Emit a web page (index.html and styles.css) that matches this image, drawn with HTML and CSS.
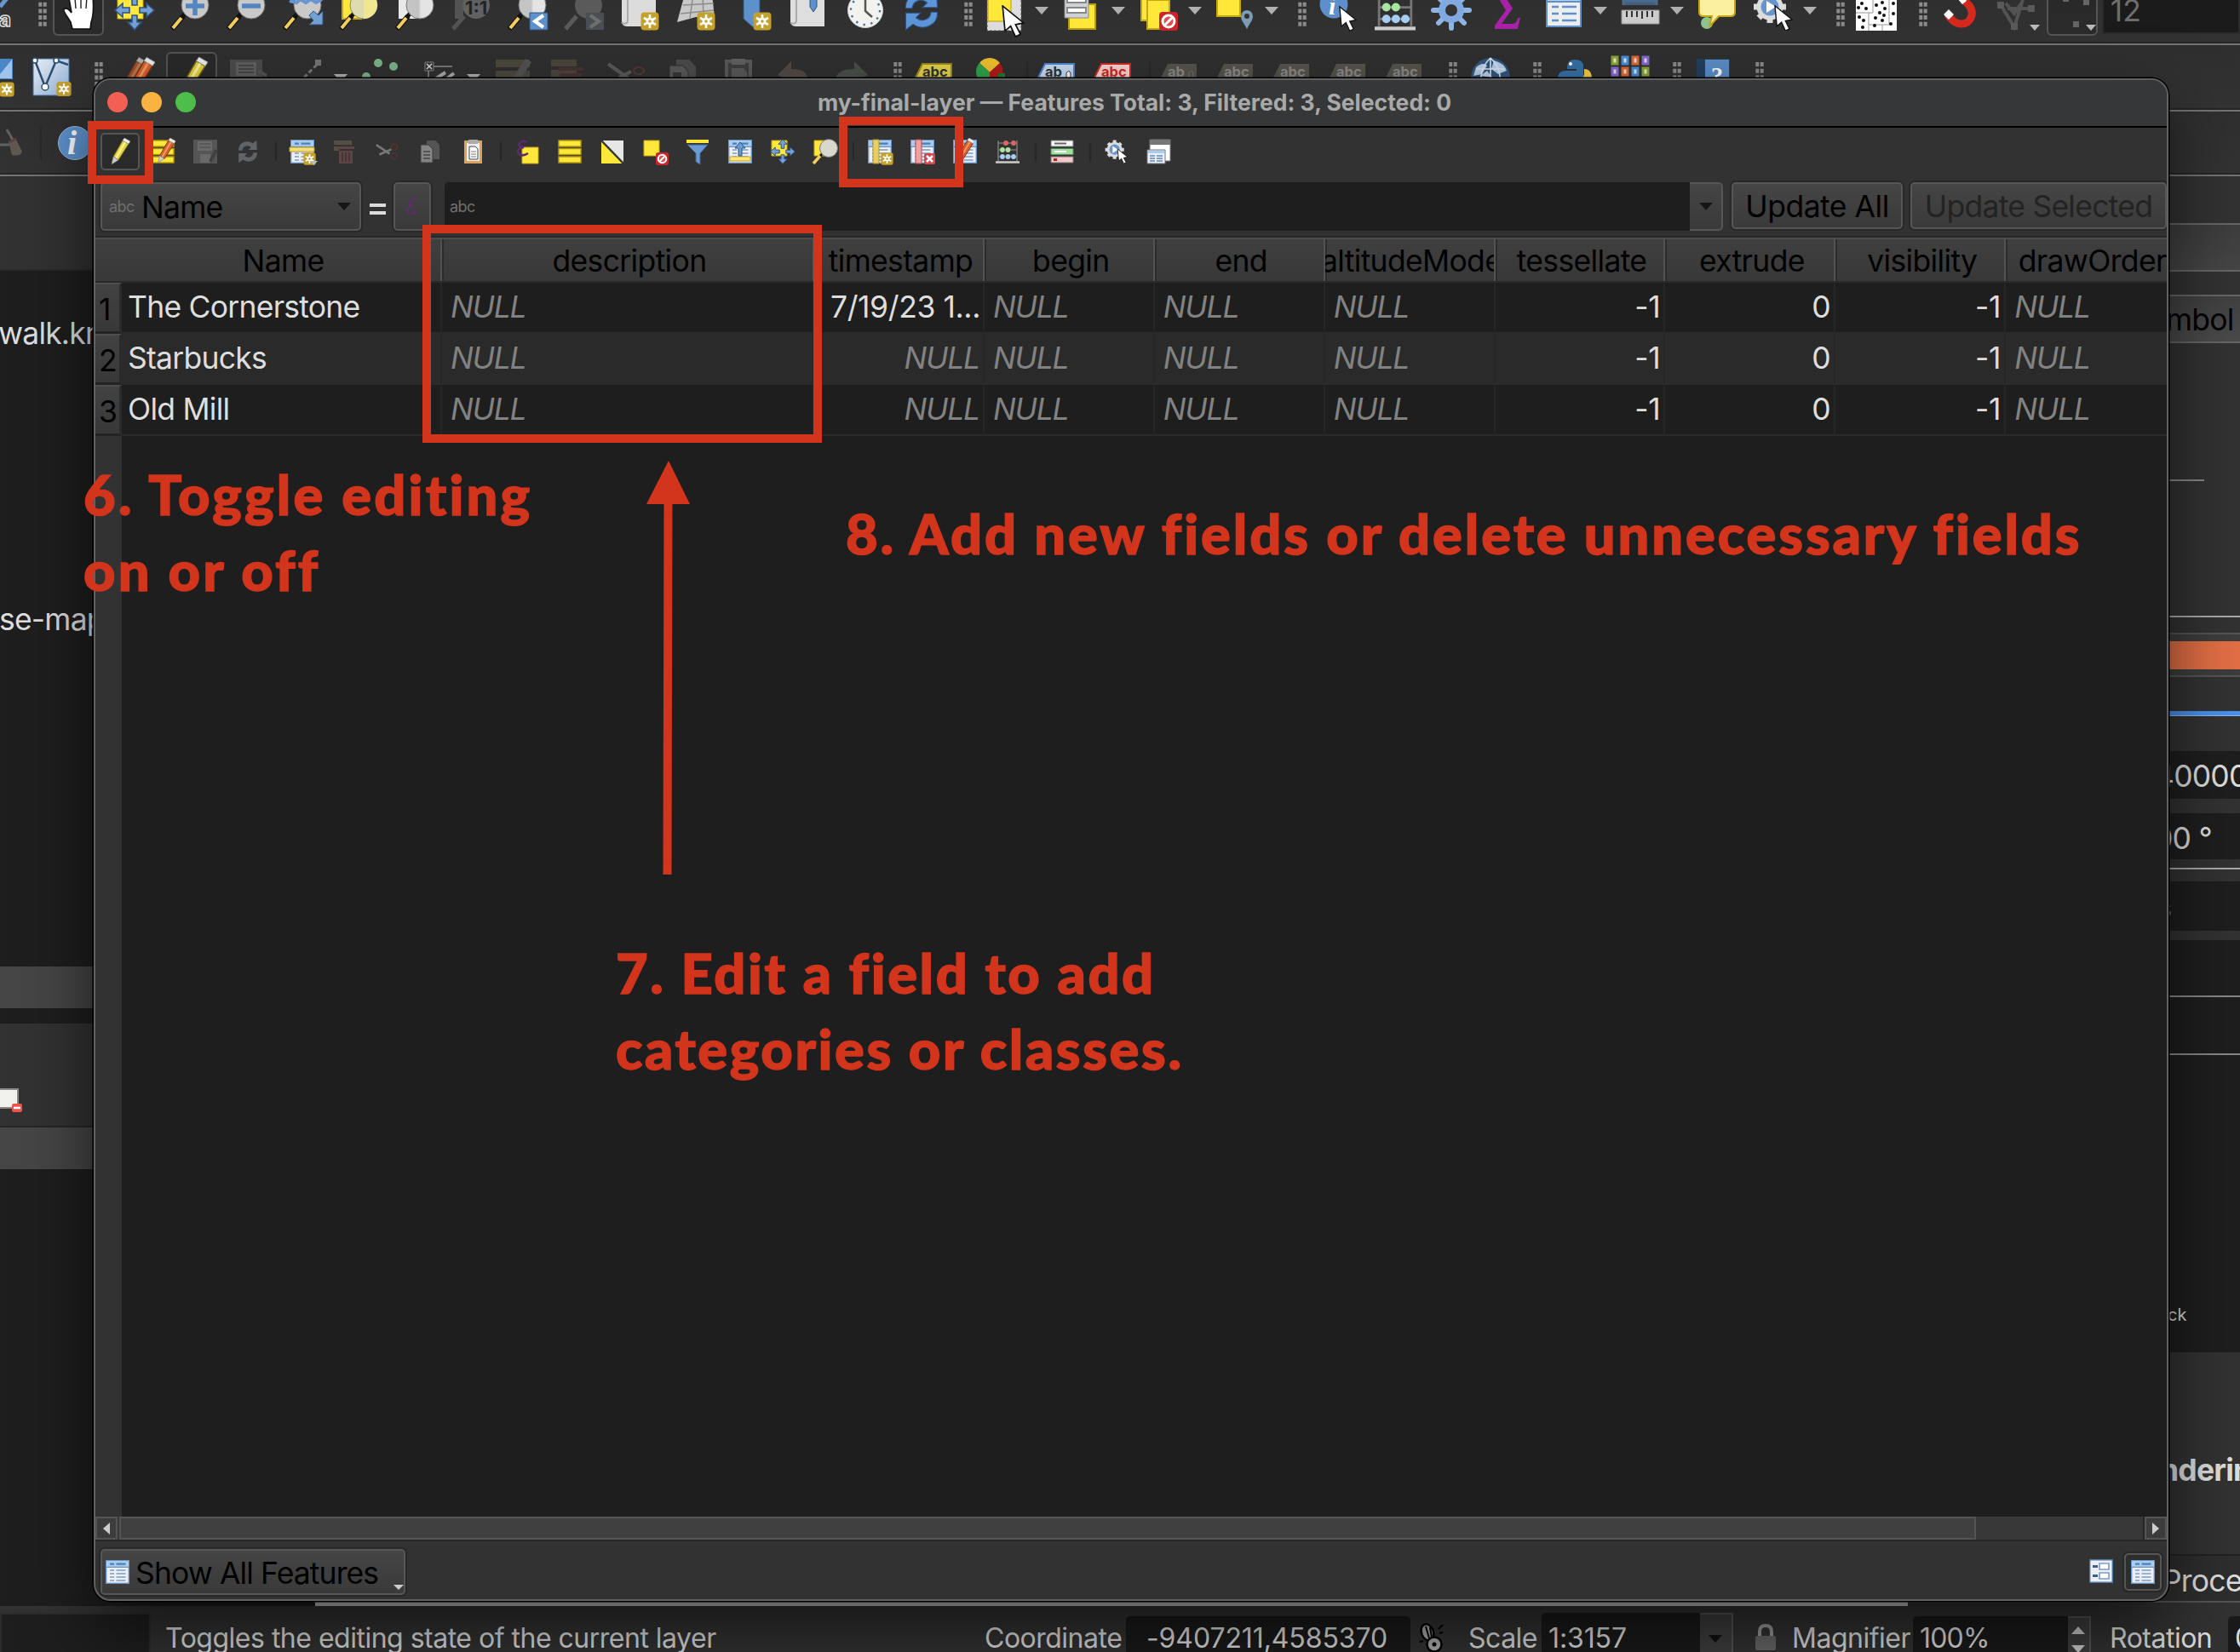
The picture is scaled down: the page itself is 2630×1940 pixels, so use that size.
FILE: index.html
```html
<!DOCTYPE html>
<html lang="en">
<head>
<meta charset="utf-8">
<title>my-final-layer — Features</title>
<link rel="stylesheet" href="styles.css">
</head>
<body>
<svg class="defs" width="0" height="0" aria-hidden="true">
<defs>
<linearGradient id="gl" x1="0" x2="1"><stop offset="0.45" stop-color="#c4c4c4"/><stop offset="0.55" stop-color="#e4e4e4"/></linearGradient>
<linearGradient id="gb" x1="0" y1="0" x2="1" y2="1"><stop offset="0" stop-color="#e8eef6"/><stop offset="1" stop-color="#8fb0d6"/></linearGradient>
<symbol id="star" viewBox="0 0 22 22"><rect x=".5" y=".5" width="21" height="21" rx="4" fill="#c4a02c"/><path d="M11 3v16M4 7l14 8M18 7L4 15" stroke="#fff" stroke-width="2.6"/><circle cx="11" cy="11" r="4.4" fill="#fff"/><circle cx="11" cy="11" r="1.8" fill="#c4a02c"/></symbol>
<symbol id="handle" viewBox="0 0 48 48"><path d="M2 46L15 31" stroke="#111" stroke-width="6"/><path d="M3 45L13 33" stroke="#f4cf5e" stroke-width="4"/><path d="M14 32l4-5" stroke="#111" stroke-width="5"/></symbol>
<symbol id="no" viewBox="0 0 22 22"><rect width="22" height="22" rx="4" fill="#c9252b"/><circle cx="11" cy="11" r="7" fill="#d9534f" stroke="#fff" stroke-width="3"/><path d="M6 16L16 6" stroke="#fff" stroke-width="3"/></symbol>
<symbol id="cursor" viewBox="0 0 28 40"><path d="M1 1l3 31 7-6 6 13 6-3-6-12 10-2z" fill="#fff" stroke="#111" stroke-width="1.8"/></symbol>
<symbol id="table" viewBox="0 0 28 28"><rect x=".7" y=".7" width="26.600" height="26.600" fill="#eceff5" stroke="#6a94c4" stroke-width="1.400"/><rect x="1.400" y="1.400" width="25.200" height="6.600" fill="#a9cdf0"/><path d="M5 4.700h5M12.500 4.700h11" stroke="#4f7fb5" stroke-width="2.200"/><path d="M1 8.300h26" stroke="#4f7fb5" stroke-width="1"/><path d="M5 12h5M5 16h5M5 20h5M5 24h5M12.500 12h11M12.500 16h11M12.500 20h11M12.500 24h11" stroke="#7d9cc4" stroke-width="1.700"/></symbol>
<symbol id="pencil" viewBox="0 0 24 32"><path d="M15 3l7 4L10 26l-6-4z" fill="#e6d43c" stroke="#6d651b"/><path d="M18 5L7 24" stroke="#fbf3a0" stroke-width="2"/><path d="M15 3l2-3 7 4-2 3z" fill="#eee" stroke="#999" stroke-width=".6"/><path d="M4 22l6 4-8 5z" fill="#ccc" stroke="#777" stroke-width=".6"/></symbol>
<symbol id="rpencil" viewBox="0 0 24 32"><path d="M15 3l7 4L10 26l-6-4z" fill="#d9622b" stroke="#7a3516"/><path d="M18 5L7 24" stroke="#f29a62" stroke-width="2"/><path d="M15 3l2-3 7 4-2 3z" fill="#eee" stroke="#999" stroke-width=".6"/><path d="M4 22l6 4-8 5z" fill="#ccc" stroke="#777" stroke-width=".6"/></symbol>
<symbol id="rows" viewBox="0 0 28 28"><path d="M1 1h26v7H1zM1 10.500h26v7H1zM1 20h26v7H1z" fill="#ffe83a" stroke="#b89a10" stroke-width="1.400"/></symbol>
<symbol id="scissors" viewBox="0 0 32 28"><path d="M1 5l18 12M5 18l16-7" stroke="#777" stroke-width="3"/><circle cx="25" cy="8" r="4" fill="none" stroke="#553333" stroke-width="1.700"/><circle cx="25" cy="20" r="4" fill="none" stroke="#553333" stroke-width="1.700"/></symbol>
<symbol id="copy" viewBox="0 0 28 28"><path d="M10 1h10l5 5v17H10z" fill="#555"/><path d="M3 6h9l5 5v16H3z" fill="#858585" stroke="#3c3c3c"/><path d="M6 14h8M6 18h8M6 22h8" stroke="#444" stroke-width="1.500"/></symbol>
<symbol id="arrows4" viewBox="0 0 48 48"><path d="M24 1l8 9h-5v8h-6v-8h-5zM24 47l8-9h-5v-8h-6v8h-5zM1 24l9-8v5h8v6h-8v5zM47 24l-9-8v5h-8v6h8v5z" fill="#74a0d4" stroke="#2f5480" stroke-width="1.600"/></symbol>
<symbol id="gear" viewBox="0 0 48 48"><g stroke="#8fb5e6" stroke-width="6" stroke-linecap="round"><path d="M24 3v42M3 24h42M9 9l30 30M39 9L9 39"/></g><circle cx="24" cy="24" r="11" fill="#333" stroke="#7fa9e0" stroke-width="8"/></symbol>
<symbol id="run" viewBox="0 0 48 48"><g stroke="#dcdcdc" stroke-width="7"><path d="M20 1v38M1 20h38M7 7l26 26M33 7L7 33"/></g><circle cx="20" cy="20" r="13" fill="#6695cf" stroke="#dcdcdc" stroke-width="5"/><path d="M16 13l11 7-11 7z" fill="#fff"/><use href="#cursor" x="24" y="18" width="24" height="31"/></symbol>
<symbol id="abacus" viewBox="0 0 28 28"><path d="M3 1v24M25 1v24M3 4h22M3 12h22M3 20h22" stroke="#777" stroke-width="1.600" fill="none"/><path d="M0 26.500h28" stroke="#ccc" stroke-width="2.400"/><g fill="#e06666"><circle cx="12" cy="4" r="2.900"/><circle cx="21" cy="4" r="2.900"/></g><g fill="#a8e6a0"><circle cx="8" cy="12" r="2.900"/><circle cx="14.500" cy="12" r="2.900"/></g><g fill="#a6cdf2"><circle cx="8" cy="20" r="2.900"/><circle cx="14.500" cy="20" r="2.900"/><circle cx="21" cy="20" r="2.900"/></g></symbol>
<symbol id="tag" viewBox="0 0 48 48"><path d="M3 24L11 8h34v32H11z"/></symbol>
<symbol id="grip" viewBox="0 0 10 36"><path d="M2.300 0v36M7.700 0v36" stroke="#8c8c8c" stroke-width="4" stroke-dasharray="5 2.700"/></symbol>
<symbol id="refresh" viewBox="0 0 40 44"><path d="M3 20C2 6 18-1 29 7l7-6 1 18H21l5-5C19 8 10 13 10 20z"/><path d="M37 24c1 14-15 21-26 13l-8 6V25h16l-5 5c7 6 16 1 16-6z"/></symbol>
</defs>
</svg>

<div class="app">
  <div class="bar bar-a">
    <span class="stub-a"><svg width="20" height="48" viewBox="0 0 20 48"><path d="M0 20L8 10" stroke="#6695cf" stroke-width="5"/><text x="-1" y="43" font-size="24" font-weight="700" fill="#333" stroke="#ddd" stroke-width="1.500" font-family="Inter">a</text></svg></span>
    <i class="grip"><svg><use href="#grip"/></svg></i>
    <i class="tool on"><svg viewBox="0 0 48 48"><path d="M17 46l-2-8C10 30 6 25 7 23c3-3 7 1 9 4L12 4c4-3 6 0 7 3V0h7v8V0h7l1 8c1-3 6-3 7 0 1 12 1 22-2 30l-1 8z" fill="#fff" stroke="#111" stroke-width="1.600"/><path d="M20 10l1 12M27 8v14M34 8l-1 14" stroke="#222" stroke-width="1.400"/></svg></i>
    <i class="tool"><svg viewBox="0 0 48 48"><path d="M4 2h30v32H4z" fill="#ffe83a" stroke="#c7a616"/><use href="#arrows4"/></svg></i>
    <i class="tool"><svg viewBox="0 0 48 48"><use href="#handle"/><circle cx="29" cy="18" r="16" fill="#c9c9c9" stroke="#777"/><path d="M29 8v22M18 19h22" stroke="#5585c0" stroke-width="5.500"/></svg></i>
    <i class="tool"><svg viewBox="0 0 48 48"><use href="#handle"/><circle cx="29" cy="18" r="16" fill="#c9c9c9" stroke="#777"/><path d="M18 19h22" stroke="#5585c0" stroke-width="5.500"/></svg></i>
    <i class="tool"><svg viewBox="0 0 48 48"><use href="#handle"/><circle cx="29" cy="18" r="16" fill="#c9c9c9" stroke="#777"/><path d="M8 13l8 2 5-4 6 4 6-4 6 4 7-4" stroke="#6695cf" stroke-width="4" fill="none"/><path d="M31 41h16V25l-5 5-6-5-5 5 5 6z" fill="#74a0d4" stroke="#2f5480"/></svg></i>
    <i class="tool"><svg viewBox="0 0 48 48"><path d="M4 2h22v32H4z" fill="#ffe83a" stroke="#c7a616" stroke-width="2"/><use href="#handle"/><circle cx="29" cy="18" r="16" fill="#dedcae" stroke="#888"/><path d="M29 2a16 16 0 010 32z" fill="#efe890"/></svg></i>
    <i class="tool"><svg viewBox="0 0 48 48"><path d="M4 2h22v32H4z" fill="#e8e8e8"/><use href="#handle"/><circle cx="29" cy="18" r="16" fill="url(#gl)" stroke="#777"/></svg></i>
    <i class="tool dim"><svg viewBox="0 0 48 48"><path d="M4 2h10v32H4z" fill="#888"/><path d="M2 46L15 31" stroke="#888" stroke-width="5"/><circle cx="29" cy="18" r="16" fill="#aaa"/><text x="16" y="29" font-size="22" font-weight="700" fill="#111" font-family="Inter">1:1</text></svg></i>
    <i class="tool"><svg viewBox="0 0 48 48"><use href="#handle"/><circle cx="29" cy="18" r="16" fill="url(#gl)" stroke="#777"/><path d="M26 27h21v20H26z" fill="#5c91cb" stroke="#2f5480"/><path d="M42 30l-10 7 10 7" stroke="#fff" stroke-width="4" fill="none"/></svg></i>
    <i class="tool dim"><svg viewBox="0 0 48 48"><path d="M2 46L15 31" stroke="#999" stroke-width="5"/><circle cx="29" cy="18" r="16" fill="#999"/><path d="M26 27h21v20H26z" fill="#6f7d8a"/><path d="M31 30l10 7-10 7" stroke="#ccc" stroke-width="4" fill="none"/></svg></i>
    <i class="tool"><svg viewBox="0 0 48 48"><path d="M2 0h40v43H8c-4 0-6-3-6-6z" fill="#dcdcdc"/><path d="M9 0v36c0 4-5 5-7 2" stroke="#aaa" stroke-width="2" fill="none"/><use href="#star" x="24" y="26" width="22" height="22"/></svg></i>
    <i class="tool"><svg viewBox="0 0 48 48"><path d="M10 5h32l3 28-22-1-22 6z" fill="#c9c9c9"/><path d="M8 18l36-2M5 28l39-4M20 5l-4 28M31 5l1 26" stroke="#8c8c8c" stroke-width="1.500"/><use href="#star" x="24" y="26" width="22" height="22"/></svg></i>
    <i class="tool"><svg viewBox="0 0 48 48"><path d="M13 0h19v30l-8 14-11-10z" fill="#5c91cb" stroke="#2f5480"/><use href="#star" x="24" y="26" width="22" height="22"/></svg></i>
    <i class="tool"><svg viewBox="0 0 48 48"><path d="M2 0h40v43H8c-4 0-6-3-6-6z" fill="#dedede"/><path d="M9 0v36c0 4-5 5-7 2" stroke="#aaa" stroke-width="2" fill="none"/><path d="M25 0h8v20l-4 6-4-6z" fill="#5c91cb" stroke="#2f5480"/></svg></i>
    <i class="tool"><svg viewBox="0 0 48 48"><circle cx="24" cy="24" r="20.500" fill="#f2f2ee" stroke="#ccc"/><circle cx="24" cy="24" r="17" fill="none" stroke="#3d6ea8" stroke-width="2.400" stroke-dasharray="2.400 6.500"/><path d="M24 8v17l8 7" stroke="#555" stroke-width="2.500" fill="none"/></svg></i>
    <i class="tool"><svg viewBox="0 0 40 44"><use href="#refresh" fill="#5d95d6" stroke="#2a5590"/></svg></i>
    <i class="grip"><svg><use href="#grip"/></svg></i>
    <i class="tool drop"><svg viewBox="0 0 48 48"><path d="M3 2h40v46H3z" fill="#ddd" stroke="#555" stroke-dasharray="3 2"/><path d="M4 2h27v35H4z" fill="#ffe83a" stroke="#b89a10"/><use href="#cursor" x="19" y="18" width="29" height="38" /></svg></i>
    <i class="tool drop"><svg viewBox="0 0 48 48"><path d="M9 17h31v29H9z" fill="#ffe83a" stroke="#b89a10" stroke-width="2"/><path d="M4 0h28v33H4z" fill="#cfd3d8" stroke="#888"/><path d="M7 10h22v5H7zM7 21h22v6H7z" fill="#fff" stroke="#888" stroke-width="2"/></svg></i>
    <i class="tool drop"><svg viewBox="0 0 48 48"><path d="M4 2h26v34H4z" fill="#ffe83a" stroke="#c7a616" stroke-width="2"/><path d="M11 12h26v34H11z" fill="#ffe83a" stroke="#c7a616" stroke-width="2"/><use href="#no" x="25" y="26" width="22" height="22"/></svg></i>
    <i class="tool drop"><svg viewBox="0 0 48 48"><path d="M3 0h27v31H3z" fill="#ffe83a" stroke="#c7a616" stroke-width="2"/><path d="M38 46c-4-8-7-10-7-15a7 7 0 0114 0c0 5-3 7-7 15z" fill="#7c9cb5"/><circle cx="38" cy="31" r="3" fill="#333"/></svg></i>
    <i class="grip"><svg><use href="#grip"/></svg></i>
    <i class="tool"><svg viewBox="0 0 48 48"><circle cx="18" cy="17" r="16.500" fill="#5c8fcb"/><text x="12" y="29" font-size="30" font-style="italic" font-weight="700" font-family="Liberation Serif" fill="#fff">i</text><use href="#cursor" x="22" y="19" width="25" height="30"/></svg></i>
    <i class="tool"><svg viewBox="0 0 28 28"><use href="#abacus"/></svg></i>
    <i class="tool"><svg viewBox="0 0 48 48"><use href="#gear"/></svg></i>
    <i class="tool"><svg viewBox="0 0 48 48"><path d="M10 0h26v12h-3c0-4-2-6-6-6h-7l10 16-13 18h12c5 0 6-3 7-7h3l-3 13H9v-4l13-18L10 4z" fill="#a822a8"/></svg></i>
    <i class="tool drop"><svg viewBox="0 0 48 48"><path d="M4 0h40v43H4z" fill="#eee" stroke="#5c91cb" stroke-width="2"/><path d="M4 2h40v12H4z" fill="#b5d2f0" stroke="#5c91cb" stroke-width="2"/><path d="M10 20h8M10 28h8M10 36h8M22 20h17M22 28h17M22 36h17" stroke="#5c91cb" stroke-width="2.500"/></svg></i>
    <i class="tool drop"><svg viewBox="0 0 48 48"><path d="M4 18V13h39v5" stroke="#4a6c90" stroke-width="3" fill="#445f7d"/><path d="M2 24h44v16H2z" fill="#ccc" stroke="#999"/><path d="M8 25v7M14 25v7M20 25v7M26 25v9M32 25v7M38 25v7" stroke="#333" stroke-width="2"/></svg></i>
    <i class="tool"><svg viewBox="0 0 48 48"><circle cx="12" cy="39" r="7" fill="#8fc48f"/><path d="M3 0h42v26q0 5-5 5H26L15 43l3-12H8q-5 0-5-5z" fill="#fbf0a0" stroke="#c7a616" stroke-width="2"/></svg></i>
    <i class="tool drop"><svg viewBox="0 0 48 48"><use href="#run"/></svg></i>
    <i class="grip"><svg><use href="#grip"/></svg></i>
    <i class="tool"><svg viewBox="0 0 48 48"><path d="M0 0h48v48H0z" fill="#fff"/><path d="M0 27h20V12M15 27v21M39 0v41H15M31 41v7" stroke="#999" fill="none"/><g fill="#111"><circle cx="7" cy="16" r="2"/><circle cx="12" cy="22" r="2"/><circle cx="3" cy="21" r="2"/><circle cx="4" cy="32" r="2"/><circle cx="9" cy="36" r="2"/><circle cx="8" cy="44" r="2"/><circle cx="24" cy="18" r="2"/><circle cx="31" cy="15" r="2"/><circle cx="34" cy="22" r="2"/><circle cx="28" cy="27" r="2"/><circle cx="23" cy="33" r="2"/><circle cx="33" cy="30" r="2"/><circle cx="31" cy="36" r="2"/><circle cx="44" cy="16" r="2"/><circle cx="44" cy="28" r="2"/><circle cx="22" cy="42" r="2"/><circle cx="41" cy="40" r="2"/></g></svg></i>
    <i class="grip"><svg><use href="#grip"/></svg></i>
    <i class="tool"><svg viewBox="0 0 48 48"><path d="M10 29c8 14 22 14 27 4 4-9-2-16-9-21" fill="none" stroke="#d42a1e" stroke-width="9"/><path d="M5 29l6-6 6 6-6 6zM21 10l6-4 5 7-5 4z" fill="#fff"/></svg></i>
    <i class="tool corner dim"><svg viewBox="0 0 48 48"><path d="M5 16l17 28L32 12M14 22h30M12 16l10 12 8-12" stroke="#888" stroke-width="4" fill="none"/><path d="M2 14h8v8H2zM18 39h8v8h-8zM38 18h8v8h-8z" fill="#999"/></svg></i>
    <i class="tool corner on"><svg viewBox="0 0 48 48"><path d="M14 8h7v7h-7zM38 12h7v7h-7zM26 38h7v7h-7z" transform="translate(-1 -1)" fill="#666"/></svg></i>
    <span class="num">12</span>
  </div>

  <div class="bar bar-b">
    <span class="stub-b"><svg width="20" height="48" viewBox="0 0 20 48"><path d="M0 2h15v24H0z" fill="#4b86c6"/><path d="M0 20L14 3v22H0z" fill="#9fc3ea"/><use href="#star" x="-2" y="29" width="20" height="18"/></svg></span>
    <i class="tool"><svg viewBox="0 0 48 48"><path d="M2 2h42v43H2z" fill="url(#gb)" stroke="#3f6f9f"/><path d="M4 4l12 31L29 4l14 5" stroke="#2f4f70" stroke-width="2.500" fill="none"/><g fill="#fff" stroke="#2f4f70" stroke-width="1.500"><circle cx="4" cy="4" r="3"/><circle cx="29" cy="4" r="3"/><circle cx="16" cy="35" r="4"/></g><use href="#star" x="29" y="28" width="18" height="19"/></svg></i>
    <i class="grip"><svg><use href="#grip"/></svg></i>
    <i class="tool"><svg viewBox="0 0 48 48"><use href="#rpencil" x="4" y="0" width="34" height="46" opacity=".7"/><use href="#rpencil" x="13" y="0" width="34" height="46"/></svg></i>
    <i class="tool on"><svg viewBox="0 0 48 48"><use href="#pencil" x="6" y="0" width="38" height="48"/></svg></i>
    <i class="tool dim"><svg viewBox="0 0 48 48"><path d="M3 3h38v42H3z" fill="#777"/><path d="M10 6h24v16H10z" fill="#aaa"/><path d="M13 10h18M13 14h18M13 18h18" stroke="#555" stroke-width="1.500"/><path d="M36 16l10 6" stroke="#888" stroke-width="4"/></svg></i>
    <i class="tool drop"><svg viewBox="0 0 48 48"><path d="M24 24L40 8" stroke="#777" stroke-width="3" stroke-dasharray="5 3"/><path d="M37 3h7v7h-7z" fill="#777"/></svg></i>
    <i class="tool"><svg viewBox="0 0 48 48"><g fill="#7db58a"><circle cx="21" cy="7" r="5"/><circle cx="39" cy="11" r="5"/><circle cx="7" cy="23" r="5"/></g></svg></i>
    <i class="tool drop"><svg viewBox="0 0 48 48"><path d="M12 11h30M14 14v14" stroke="#777" stroke-width="2"/><path d="M10 6h10v10H10z" fill="#333" stroke="#888"/><path d="M12 8l6 6M18 8l-6 6" stroke="#ddd" stroke-width="1.500"/><path d="M22 26l12-8M36 25l8-6" stroke="#aaa" stroke-width="4"/></svg></i>
    <i class="tool dim"><svg viewBox="0 0 48 48"><path d="M3 3h40v9H3zM3 16h40v9H3z" fill="#77704f"/><path d="M22 26L38 2l7 4-14 22z" fill="#888"/></svg></i>
    <i class="tool dim"><svg viewBox="0 0 48 48"><path d="M2 3h30v8H2zM2 15h30v9H2z" fill="#776a4f"/><path d="M10 12h30v4H10zM12 19h26v20H12z" fill="#6d3a3a"/></svg></i>
    <i class="tool dim"><svg viewBox="0 0 48 48"><path d="M3 8l28 20M16 24l14-7" stroke="#999" stroke-width="4"/><ellipse cx="39" cy="16" rx="6" ry="4" fill="none" stroke="#844" stroke-width="2"/></svg></i>
    <i class="tool dim"><svg viewBox="0 0 48 48"><path d="M17 3h15l8 8v24H17z" fill="#777"/><path d="M9 10h16l6 7v30H9z" fill="#999" stroke="#333"/><path d="M13 18h10v6H13z" fill="#444"/></svg></i>
    <i class="tool dim"><svg viewBox="0 0 48 48"><path d="M8 3h32v44H8z" fill="#999"/><path d="M12 7h24v40H12z" fill="#555"/><path d="M16 2h16v7H16z" fill="#aaa"/><path d="M16 13h14l4 5v20H16z" fill="#999"/></svg></i>
    <i class="tool dim"><svg viewBox="0 0 48 48"><path d="M4 21L20 5v9c14 0 20 5 20 15H20z" fill="#8a7466"/></svg></i>
    <i class="tool dim"><svg viewBox="0 0 48 48"><path d="M44 21L28 5v9C14 14 6 18 6 29h22z" fill="#73806f"/></svg></i>
    <i class="grip"><svg><use href="#grip"/></svg></i>
    <i class="tool"><svg viewBox="0 0 48 48"><use href="#tag" fill="#e6d24a" stroke="#9c8a1a" stroke-width="2"/><text class="tg" x="11" y="23">abc</text></svg></i>
    <i class="tool"><svg viewBox="0 0 48 48"><path d="M24 18L12 7a15 15 0 0124 0z" fill="#f2c22e"/><path d="M24 18L12 7C4 16 8 30 24 34z" fill="#2fa44a"/><path d="M24 18L36 7c8 10 2 24-12 27z" fill="#b51a1a"/><path d="M34 19h8v8h-8z" fill="#1f7a34"/></svg></i>
    <i class="sep"></i>
    <i class="tool"><svg viewBox="0 0 48 48"><use href="#tag" fill="#c8dcf4" stroke="#4b86d6" stroke-width="2"/><text class="tg" x="11" y="23">ab</text><path d="M36 24v-5q3-5 5 0v5" stroke="#333" fill="#fff"/></svg></i>
    <i class="tool"><svg viewBox="0 0 48 48"><use href="#tag" fill="#fbd5d5" stroke="#d42a1e" stroke-width="2"/><text class="tg red" x="11" y="23">abc</text></svg></i>
    <i class="sep"></i>
    <i class="tool"><svg viewBox="0 0 48 48"><use href="#tag" fill="#56554c"/><text class="tg off" x="11" y="23">ab</text><path d="M36 24v-5q3-5 5 0v5" stroke="#777" fill="none"/></svg></i>
    <i class="tool"><svg viewBox="0 0 48 48"><use href="#tag" fill="#56554c"/><text class="tg off" x="11" y="23">abc</text></svg></i>
    <i class="tool"><svg viewBox="0 0 48 48"><use href="#tag" fill="#56554c"/><text class="tg off" x="11" y="23">abc</text></svg></i>
    <i class="tool"><svg viewBox="0 0 48 48"><use href="#tag" fill="#56554c"/><text class="tg off" x="11" y="23">abc</text></svg></i>
    <i class="tool"><svg viewBox="0 0 48 48"><use href="#tag" fill="#56554c"/><text class="tg off" x="11" y="23">abc</text></svg></i>
    <i class="grip wide"><svg><use href="#grip"/></svg></i>
    <i class="tool"><svg viewBox="0 0 48 48"><circle cx="24" cy="24" r="23" fill="#34567c"/><path d="M7 12q8-7 13-2l-6 10-10 2zM28 4q12 3 15 12l-10 4-8-6zM12 22l8-6 6 8z" fill="#b8d0ea"/><path d="M24 1C10 14 12 30 14 40M24 1c14 13 12 29 10 39M24 1v40M7 14h34" stroke="#dbe7f4" stroke-width="1.600" fill="none"/></svg></i>
    <i class="grip"><svg><use href="#grip"/></svg></i>
    <i class="tool"><svg viewBox="0 0 48 48"><path d="M16 12q0-9 9-9 10 0 10 8v14H5q0-9 10-9h12v-2H16z" fill="#3671a8"/><circle cx="20" cy="8" r="2" fill="#fff"/><path d="M36 14q9 0 9 12H30q6-2 6-6z" fill="#f6cf45"/></svg></i>
    <i class="tool"><svg viewBox="0 0 48 48"><g stroke-width="3"><path d="M3 0h6v8H3z" fill="#e6efc0" stroke="#8aa63a"/><path d="M15 0h6v8h-6z" fill="#d5e8fa" stroke="#4b8fd6"/><path d="M27 0h6v8h-6z" fill="#fbdcca" stroke="#dc6a3a"/><path d="M39 0h6v8h-6z" fill="#e3daf8" stroke="#8a6ad0"/><path d="M3 13h6v8H3z" fill="#e3daf8" stroke="#8a6ad0"/><path d="M15 13h6v8h-6z" fill="#fbdcca" stroke="#dc6a3a"/><path d="M27 13h6v8h-6z" fill="#d5e8fa" stroke="#4b8fd6"/><path d="M39 13h6v8h-6z" fill="#e6efc0" stroke="#8aa63a"/></g></svg></i>
    <i class="grip"><svg><use href="#grip"/></svg></i>
    <i class="tool"><svg viewBox="0 0 48 48"><path d="M5 2h39v44H5z" fill="#24405e"/><path d="M15 3h28v42H15z" fill="#5c8fc8"/><text x="22" y="31" font-size="28" fill="#fff" font-family="Liberation Serif" font-weight="700">?</text></svg></i>
    <i class="grip"><svg><use href="#grip"/></svg></i>
  </div>

  <div class="bar bar-c">
    <i class="broom dim"><svg width="32" height="48" viewBox="0 0 32 48"><path d="M0 26h12M8 8l8 14" stroke="#aaa" stroke-width="3"/><path d="M10 22l8-4 8 16q-2 6-12 4z" fill="#a8937f"/><path d="M11 23l8-4" stroke="#a55" stroke-width="3"/></svg></i>
    <i class="sep"></i>
    <i class="tool"><svg viewBox="0 0 48 48"><circle cx="24" cy="24" r="19.500" fill="#5f93cf" stroke="#9bbce0"/><text x="15" y="37" font-size="40" font-style="italic" font-weight="700" font-family="Liberation Serif" fill="#fff">i</text></svg></i>
  </div>

  <div class="mid">
    <div class="left">
      <div class="l-head"></div>
      <div class="l-tree"><span class="l1">walk.kml</span><span class="l2">se-map</span></div>
      <div class="l-band"></div>
      <div class="l-gap"></div>
      <div class="l-tools"><svg width="30" height="34" viewBox="0 0 30 34"><path d="M-2 3h23v22H-2z" fill="#f1f1ee" stroke="#8a8a86" stroke-width="2"/><rect x="14" y="20" width="12" height="10" rx="2" fill="#ef5350"/><path d="M16 25h8" stroke="#fff" stroke-width="2.500"/></svg></div>
      <div class="l-band"></div>
      <div class="l-rest"></div>
    </div>
    <div class="canvas"></div>
    <div class="right">
      <div class="gap-a"></div>
      <div class="r-tab"></div>
      <div class="gap-b"></div>
      <div class="r-btn">mbol</div>
      <div class="gap-c"><hr></div>
      <div class="gap-d"></div>
      <div class="r-color"><b></b></div>
      <div class="gap-e"></div>
      <div class="r-slider"></div>
      <div class="gap-f"></div>
      <div class="r-input i1">40000</div>
      <div class="gap-g"></div>
      <div class="r-input i2">00 °</div>
      <div class="gap-h"></div>
      <div class="r-input i3">s</div>
      <div class="gap-i"></div>
      <div class="r-list"><hr><hr><span>ck</span></div>
      <div class="r-render">ndering</div>
      <div class="r-proc">Proce</div>
    </div>
  </div>

  <div class="status">
    <div class="locator"></div>
    <span class="msg">Toggles the editing state of the current layer</span>
    <span class="lab coord">Coordinate</span>
    <span class="field coordv">-9407211,4585370</span>
    <svg class="bug" viewBox="0 0 32 34"><ellipse cx="11" cy="11" rx="7" ry="10" fill="#aaa" stroke="#000" stroke-width="2.500" transform="rotate(-20 11 11)"/><path d="M9 4l4 14M14 5l2 12" stroke="#000" stroke-width="2"/><circle cx="19" cy="25" r="8.500" fill="#aaa" stroke="#000" stroke-width="2.500"/><circle cx="19" cy="25" r="2.500"/><path d="M24 7l5-5M2 22l4-1M25 12l4-1" stroke="#000" stroke-width="2"/></svg>
    <span class="lab scale">Scale</span>
    <span class="field scalev">1:3157<em></em></span>
    <svg class="lock" viewBox="0 0 24 34"><path d="M5 16v-6q0-7 7-7t7 7v6" fill="none" stroke="#999" stroke-width="4"/><rect y="15" width="24" height="17" rx="2" fill="#666"/></svg>
    <span class="lab magn">Magnifier</span>
    <span class="field magnv">100%<em></em></span>
    <span class="lab rot">Rotation</span>
    <span class="field rotv">0</span>
  </div>
</div>

<div class="window">
  <div class="titlebar">
    <div class="lights"><b class="red-light"></b><b class="amber-light"></b><b class="green-light"></b></div>
    <h1>my-final-layer — Features Total: 3, Filtered: 3, Selected: 0</h1>
  </div>

  <div class="wtools">
    <i class="w on"><svg viewBox="0 0 28 28"><use href="#pencil" x="2" y="-2" width="24" height="32"/></svg></i>
    <i class="w"><svg viewBox="0 0 28 28"><use href="#rows"/><use href="#rpencil" x="6" y="-2" width="24" height="30"/></svg></i>
    <i class="w dim"><svg viewBox="0 0 28 28"><path d="M0 0h28v28H0z" fill="#8a8a8a"/><path d="M5 2h17v11H5zM8 17h12v10H8z" fill="#bbb"/><path d="M7 5h13M7 9h13" stroke="#666"/><path d="M27 12l-7 14" stroke="#555" stroke-width="4"/></svg></i>
    <i class="w"><svg viewBox="0 0 40 44"><use href="#refresh" fill="#606468"/></svg></i>
    <i class="sep"></i>
    <i class="w"><svg viewBox="0 0 28 28"><use href="#table" width="28" height="28"/><path d="M-1 9h29v5H-1z" fill="#f3df7c" stroke="#b89a20"/><use href="#star" x="15" y="15" width="15" height="15"/><path d="M23 25h9l-4.500 5z" fill="#bbb"/></svg></i>
    <i class="w dim"><svg viewBox="0 0 28 28"><path d="M1 1h21v5H1zM1 8h6v5H1z" fill="#8a7a5a"/><path d="M5 8h20v3H5zM7 13h16v15H7z" fill="#a06060"/><path d="M11 15v11M15 15v11M19 15v11" stroke="#533" stroke-width="1.500"/></svg></i>
    <i class="w"><svg viewBox="0 0 32 28"><use href="#scissors"/></svg></i>
    <i class="w"><svg viewBox="0 0 28 28"><use href="#copy"/></svg></i>
    <i class="w"><svg viewBox="0 0 28 28"><path d="M4 1h21v27H4z" fill="#d9a45c"/><path d="M7 4h15v21H7z" fill="#f0f0f0"/><path d="M9 0h11v5H9z" fill="#aaa"/><path d="M10 8h7l3 3v12H10z" fill="#fff" stroke="#444"/><path d="M12 14h6M12 17h6M12 20h6" stroke="#777"/></svg></i>
    <i class="sep"></i>
    <i class="w"><svg viewBox="0 0 28 28"><path d="M8 9h19v19H8z" fill="#ffe83a" stroke="#c7a616"/><path d="M14 3Q9 0 5 4q-2 4 5 5-8 1-7 6 4 6 12 1" fill="none" stroke="#5d2a6b" stroke-width="2.600"/></svg></i>
    <i class="w"><svg viewBox="0 0 28 28"><use href="#rows"/></svg></i>
    <i class="w"><svg viewBox="0 0 28 28"><path d="M1 1h26v26H1z" fill="#e6e6e6"/><path d="M1 2v26h26z" fill="#ffe83a"/><path d="M1 1l26 27" stroke="#333" stroke-width="2.500"/></svg></i>
    <i class="w"><svg viewBox="0 0 28 28"><path d="M1 1h18v18H1z" fill="#ffe83a" stroke="#c7a616"/><use href="#no" x="15" y="15" width="15" height="15"/></svg></i>
    <i class="w"><svg viewBox="0 0 28 28"><path d="M1 0h26v4H1z" fill="#ffe83a"/><path d="M2 6h24l-9 10v13l-5-3V16z" fill="#6b9bd2" stroke="#3b648f"/></svg></i>
    <i class="w"><svg viewBox="0 0 28 28"><use href="#table" width="28" height="28"/><path d="M2 20h24v5H2z" fill="#ffe87a" stroke="#c7a616"/><path d="M14 3l6 7h-4v9h-4v-9H8z" fill="#6b9bd2" stroke="#2f5480"/></svg></i>
    <i class="w"><svg viewBox="0 0 28 28"><path d="M1 1h18v18H1z" fill="#ffe83a" stroke="#c7a616"/><use href="#arrows4" x="-1" y="-1" width="30" height="30"/></svg></i>
    <i class="w"><svg viewBox="0 0 28 28"><path d="M1 1h15v18H1z" fill="#ffe83a" stroke="#c7a616"/><path d="M0 28l8-9" stroke="#f4cf5e" stroke-width="3.500"/><path d="M8 19l3-3" stroke="#111" stroke-width="3"/><circle cx="18" cy="10" r="10.500" fill="#d9d8cc" stroke="#777"/></svg></i>
    <i class="sep"></i>
    <i class="w"><svg viewBox="0 0 28 28"><use href="#table" width="28" height="28"/><path d="M6 0h7v28H6z" fill="#e8cf62" stroke="#b8921c"/><use href="#star" x="15" y="15" width="15" height="15"/></svg></i>
    <i class="w"><svg viewBox="0 0 28 28"><use href="#table" width="28" height="28"/><path d="M6 0h7v28H6z" fill="#f0a0a0" stroke="#c04848"/><rect x="16" y="16" width="13" height="13" rx="2" fill="#d9484f"/><path d="M19 19l7 7M26 19l-7 7" stroke="#fff" stroke-width="2.500"/></svg></i>
    <i class="w"><svg viewBox="0 0 28 28"><use href="#table" width="28" height="28"/><use href="#rpencil" x="2" y="-2" width="24" height="30"/></svg></i>
    <i class="w"><svg viewBox="0 0 28 28"><use href="#abacus"/></svg></i>
    <i class="sep"></i>
    <i class="w"><svg viewBox="0 0 28 28"><path d="M1 1h26v7H1z" fill="#f6f6f6" stroke="#777"/><path d="M1 10.500h26v7H1z" fill="#9fe0a0" stroke="#5a8a5a"/><path d="M1 20h26v7H1z" fill="#f4c8c8" stroke="#777"/><path d="M5 4.500h14" stroke="#666" stroke-width="2"/><path d="M5 14h14" stroke="#fff" stroke-width="2"/><path d="M4 23.500h4" stroke="#a22" stroke-width="3"/></svg></i>
    <i class="sep"></i>
    <i class="w"><svg viewBox="0 0 48 48"><use href="#run"/></svg></i>
    <i class="w"><svg viewBox="0 0 28 28"><path d="M3 0h24v25H3z" fill="#fff" stroke="#777"/><path d="M3 0h24v6H3z" fill="#777"/><path d="M0 12h21v16H0z" fill="#eef2f8" stroke="#777"/><path d="M1 13h19v3H1z" fill="#a9cdf0"/><path d="M3 19h6M3 22h6M3 25h6M11 19h7M11 22h7M11 25h7" stroke="#5a86bd" stroke-width="1.500"/></svg></i>
  </div>

  <div class="calc">
    <div class="btn combo"><small>abc</small><span>Name</span><em></em></div>
    <span class="eq"></span>
    <div class="btn eps"><svg width="20" height="26" viewBox="0 0 22 30"><path d="M17 6Q11 0 7 5q-2 6 6 8-10 1-9 8 4 7 13 0" fill="none" stroke="#5f2d6e" stroke-width="2.800" stroke-dasharray="9 2"/></svg></div>
    <div class="entry"><small>abc</small><div class="btn dd"><em></em></div></div>
    <div class="btn ua">Update All</div>
    <div class="btn us">Update Selected</div>
  </div>

  <div class="grid head">
    <div class="nh"></div><div>Name</div><div>description</div><div>timestamp</div><div>begin</div><div>end</div><div>altitudeMode</div><div>tessellate</div><div>extrude</div><div>visibility</div><div>drawOrder</div>
  </div>
  <div class="grid row">
    <div class="n">1</div><div class="nm">The Cornerstone</div><div class="u">NULL</div><div class="ts">7/19/23 1...</div><div class="u">NULL</div><div class="u">NULL</div><div class="u">NULL</div><div class="v">-1</div><div class="v">0</div><div class="v">-1</div><div class="u">NULL</div>
  </div>
  <div class="grid row alt">
    <div class="n">2</div><div class="nm">Starbucks</div><div class="u">NULL</div><div class="u e">NULL</div><div class="u">NULL</div><div class="u">NULL</div><div class="u">NULL</div><div class="v">-1</div><div class="v">0</div><div class="v">-1</div><div class="u">NULL</div>
  </div>
  <div class="grid row">
    <div class="n">3</div><div class="nm">Old Mill</div><div class="u">NULL</div><div class="u e">NULL</div><div class="u">NULL</div><div class="u">NULL</div><div class="u">NULL</div><div class="v">-1</div><div class="v">0</div><div class="v">-1</div><div class="u">NULL</div>
  </div>
  <div class="empty"></div>
  <div class="scroll"><b class="sl"><svg width="10" height="16"><path d="M9 1v14L1 8z" fill="#ccc"/></svg></b><b class="thumb"></b><b class="track"></b><b class="sl"><svg width="10" height="16"><path d="M1 1v14l8-7z" fill="#ccc"/></svg></b></div>
  <div class="foot">
    <div class="btn show"><svg width="28" height="28"><use href="#table" width="28" height="28"/></svg><span>Show All Features</span><em></em></div>
    <svg class="form" width="28" height="28" viewBox="0 0 28 28"><path d="M.7.7h26.600v26.600H.7z" fill="#eceff5" stroke="#4a74a4" stroke-width="1.400"/><path d="M4 8.500h6M4 19.500h6" stroke="#3d5f88" stroke-width="3"/><path d="M12 5h11v7H12zM12 16h11v7H12z" fill="#fff" stroke="#7d9cc4" stroke-width="1.600"/></svg>
    <div class="btn tv"><svg width="28" height="28"><use href="#table" width="28" height="28"/></svg></div>
  </div>
</div>

<div class="mark m1"></div>
<div class="mark m2"></div>
<div class="mark m3"></div>
<svg class="arrow" width="52" height="486" viewBox="0 0 52 486"><path d="M27 0l25 51H31.500L30.500 486h-10L21.500 51H1z" fill="#d2341c"/></svg>
<p class="note n6">6. Toggle editing<br>on or off</p>
<p class="note n7">7. Edit a field to add<br>categories or classes.</p>
<p class="note n8">8. Add new fields or delete unnecessary fields</p>
</body>
</html>
```
FILE: styles.css
```css
* { box-sizing: border-box; }
html, body { margin: 0; }
body {
  position: relative;
  width: 2630px;
  height: 1940px;
  overflow: hidden;
  background: #1e1e1e;
  font-family: Inter, "Liberation Sans", sans-serif;
  font-size: 35.500px;
  line-height: 44px;
  color: #dedede;
  white-space: nowrap;
}
.defs { position: absolute; }
svg { display: block; overflow: visible; flex: none; }
i, em { font-style: normal; }

/* main application behind the table window */
.app { display: flex; flex-direction: column; width: 2630px; height: 1940px; overflow: hidden; }
.bar { display: flex; flex: none; align-items: center; overflow: hidden; background: linear-gradient(#2f2f2f, #333); border-bottom: 2px solid #747474; box-shadow: inset 0 -2px #262626; }
.bar-a { height: 53px; align-items: flex-start; }
.bar-a > * { margin-top: -18px; }
.bar-b { height: 78px; }
.bar-c { height: 76px; }
.tool { display: flex; flex: none; align-items: center; justify-content: center; width: 66px; height: 60px; position: relative; }
.tool.on::before { content: ""; position: absolute; inset: 0 3px; border: 2px solid #555; border-radius: 6px; background: rgba(30,30,30,.3); }
.tool > svg { position: relative; width: 48px; height: 48px; }
.tool.drop { width: 90px; justify-content: flex-start; padding-left: 9px; }
.tool.drop::after { content: ""; margin-left: 11px; border: 8px solid transparent; border-top: 9px solid #b0b0b0; border-bottom: 0; }
.tool.corner::after { content: ""; position: absolute; right: 5px; bottom: 6px; border: 6px solid transparent; border-top: 7px solid #bbb; border-bottom: 0; }
.dim > svg { opacity: .4; }
.grip { flex: none; width: 31.600px; height: 60px; display: flex; align-items: center; padding-left: 17px; }
.grip.wide { width: 36px; padding-left: 20px; }
.grip svg { width: 10px; height: 36px; }
.bar-a .grip { align-items: flex-end; padding-bottom: 11px; }
.sep { flex: none; width: 12px; height: 40px; border-right: 2px solid #2a2a2a; }
.stub-a { width: 28px; height: 60px; padding-top: 6px; }
.stub-b { width: 28px; }
.num { width: 163px; height: 58px; margin-left: 2px; padding: 9px 0 0 8px; background: #1b1b1b; border: 2px solid #2b2b2b; border-top: 0; color: #6e6e6e; }
.tg { font: 700 16.500px Inter, sans-serif; fill: #333; }
.tg.red { fill: #d42a1e; }
.tg.off { fill: #8a8a8a; }
.broom { width: 37px; }
.bar-c .tool { margin-left: 6px; }

.mid { display: flex; height: 1679px; flex: none; letter-spacing: -.8px; }
.left { width: 370px; display: flex; flex-direction: column; }
.l-head { height: 111px; background: #323232; border-bottom: 2px solid #2a2a2a; }
.l-tree { height: 817px; background: #1e1e1e; padding-top: 52px; display: flex; flex-direction: column; }
.l-tree span { margin-left: -2px; }
.l-tree .l2 { margin-top: 292px; margin-left: -1px; }
.l-band { height: 49px; background: #464646; }
.l-gap { height: 18px; background: #1e1e1e; }
.l-tools { height: 122px; background: #323232; border-bottom: 2px solid #262626; padding-top: 74px; }
.l-rest { flex: 1; background: #1e1e1e; }
.canvas { width: 1870px; background: #c4c4c4; }
.right { width: 390px; display: flex; flex-direction: column; background: #323232; }
.right > * { flex: none; padding-left: 305px; }
.right hr { margin: 0; border: 0; height: 2px; background: #888; }
.gap-a { height: 55px; }
.r-tab { height: 57px; background: linear-gradient(#3d3d3d, #454545); border-top: 2px solid #666; border-bottom: 2px solid #666; }
.gap-b { height: 27px; }
.r-btn { height: 57px; background: linear-gradient(#414141, #4a4a4a); border-top: 2px solid #666; border-bottom: 2px solid #666; color: #000; line-height: 56px; }
.right .r-btn { padding-left: 303px; }
.gap-c { height: 322px; padding-top: 160px; border-bottom: 2px solid #aaa; }
.gap-c hr { width: 43px; }
.gap-d { height: 18px; }
.r-color { height: 52px; padding-top: 8px; border-top: 2px solid #555; border-bottom: 2px solid #555; background: #3d3d3d; }
.r-color b { display: block; height: 33px; background: #e36f45; }
.gap-e { height: 40px; }
.r-slider { height: 6px; background: #4b91ee; border-bottom: 1px solid #8dbaf5; }
.gap-f { height: 41px; }
.r-input { background: #1e1e1e; line-height: 59px; }
.right .i1 { height: 56px; padding-left: 290px; }
.gap-g { height: 17px; }
.right .i2 { height: 54px; padding-left: 289px; }
.gap-h { height: 26px; background: linear-gradient(#323232 10px, #aaa 10px, #aaa 12px, #323232 12px); }
.right .i3 { height: 58px; padding-left: 295px; font-size: 28px; color: #aaa; line-height: 64px; }
.gap-i { height: 11px; }
.r-list { height: 484px; background: #1e1e1e; padding-top: 65px; }
.r-list hr + hr { margin-top: 66px; }
.r-list span { display: block; margin-top: 283px; font-size: 20px; letter-spacing: 0; color: #ddd; }
.r-render { height: 237px; background: #323232; font-weight: 700; line-height: 44px; padding-top: 117px; }
.right .r-render { padding-left: 296px; }
.r-proc { height: 57px; background: #2e2e2e; border-top: 2px solid #222; border-bottom: 2px solid #555; line-height: 60px; }
.right .r-proc { padding-left: 299px; }

.status { display: flex; height: 54px; flex: none; background: #323232; border-top: 1px solid #333; overflow: hidden; font-size: 32px; letter-spacing: -.500px; }
.status > * { flex: none; margin-top: 15px; height: 60px; }
.status > .locator { width: 177px; margin-top: 7px; background: #1e1e1e; border: 2px solid #2c2c2c; }
.msg { width: 962px; margin-left: 17px; }
.coord { width: 166px; }
.status > .field { background: #1a1a1a; margin-top: 11px; padding-top: 4px; border-radius: 5px 5px 0 0; letter-spacing: -.1px; }
.coordv { width: 334px; padding-left: 24px; }
.status > .bug { width: 32px; height: 34px; margin: 19px 0 0 9px; }
.scale { width: 86px; margin-left: 27px; }
.status > .scalev { width: 225px; margin-top: 7px; padding: 8px 0 0 8px; position: relative; }
.scalev em { position: absolute; right: 0; top: 0; width: 39px; height: 60px; background: #3e3e3e; border: 2px solid #555; border-left: 0; }
.scalev em::after { content: ""; position: absolute; left: 10px; top: 24px; border: 8px solid transparent; border-top: 9px solid #111; border-bottom: 0; }
.status > .lock { width: 24px; height: 34px; margin: 19px 0 0 26px; }
.magn { width: 142px; margin-left: 19px; }
.status > .magnv { width: 209px; padding-left: 8px; position: relative; letter-spacing: -.8px; }
.magnv em { position: absolute; right: 0; top: 0; width: 27px; height: 60px; background: #3e3e3e; border: 2px solid #555; border-left: 0; }
.magnv em::before { content: ""; position: absolute; left: 4px; top: 10px; border: 8px solid transparent; border-bottom: 9px solid #ccc; border-top: 0; }
.magnv em::after { content: ""; position: absolute; left: 4px; top: 32px; border: 8px solid transparent; border-top: 9px solid #ccc; border-bottom: 0; }
.rot { width: 139px; margin-left: 22px; }
.rotv { width: 30px; padding-left: 8px; }

/* attribute table window */
.window {
  position: absolute;
  left: 110px;
  top: 92px;
  width: 2436px;
  height: 1788px;
  display: flex;
  flex-direction: column;
  overflow: hidden;
  background: #323232;
  border: 2px solid #606162;
  border-radius: 20px;
  box-shadow: 0 0 0 1.500px #000, 0 34px 84px rgba(0,0,0,.62);
}
.titlebar { flex: none; height: 56px; display: grid; grid-template-columns: 1fr auto 1fr; align-items: center; background: #353738; border-bottom: 2px solid #000; padding-bottom: 2px; }
.lights { display: flex; gap: 16px; padding-left: 14px; }
.lights b { width: 24px; height: 24px; border-radius: 50%; }
.red-light { background: #f35f52; }
.amber-light { background: #fab342; }
.green-light { background: #4ebe4a; }
h1 { margin: 0 -4px 0 4px; font-size: 26.500px; font-weight: 700; color: #a9a9a9; }
.wtools { flex: none; height: 62px; display: flex; align-items: center; padding: 0 0 6px 4px; }
.wtools .sep { width: 14px; height: 22px; border-right: 0; background: linear-gradient(90deg, transparent 7px, #272727 7px, #272727 9px, transparent 9px); }
.w { width: 50px; height: 44px; flex: none; display: flex; align-items: center; justify-content: center; position: relative; }
.w > svg { width: 28px; height: 28px; position: relative; }
.w.on::before { content: ""; position: absolute; inset: 0 2px; border: 2px solid #555; border-radius: 5px; background: #2a2a2a; }

.btn { display: flex; align-items: center; flex: none; color: #000; background: linear-gradient(#454545, #3a3a3a); border: 2px solid #565656; border-radius: 5px; box-shadow: 0 0 0 2px #282828; }
small { font-size: 18px; color: #6e6e6e; line-height: 20px; letter-spacing: -.6px; }
.calc { flex: none; height: 67px; display: flex; align-items: flex-start; padding: 2px 0 0 6px; letter-spacing: -.750px; }
.combo { width: 306px; height: 57px; padding-left: 8px; }
.combo small { width: 38px; }
.combo span { padding-top: 2px; }
.combo em, .dd em, .show em { border: 8px solid transparent; border-top: 9px solid #161616; border-bottom: 0; }
.combo em { margin: 0 10px 0 auto; }
.eq { width: 19px; height: 13px; margin: 25px 9px 0 10px; border: solid #dcdcdc; border-width: 4px 0; }
.eps { width: 44px; height: 57px; justify-content: center; }
.entry { width: 1502px; height: 57px; margin-left: 16px; display: flex; align-items: center; background: #1e1e1e; padding-left: 6px; border-radius: 5px; }
.dd { margin-left: auto; width: 39px; height: 57px; justify-content: center; border-left: 0; border-radius: 0 5px 5px 0; box-shadow: none; }
.ua, .us { height: 55px; padding-top: 3px; justify-content: center; }
.ua { width: 201px; margin-left: 10px; letter-spacing: -.5px; }
.us { width: 301px; margin-left: 9px; color: #232323; }

.grid { flex: none; display: grid; grid-template-columns: 31px 376px 437px repeat(8, 199.900px); letter-spacing: -.3px; }
.grid > div { overflow: hidden; }
.head { height: 53px; background: linear-gradient(#3f3f3f, #383838); border-top: 2px solid #4c4c4c; border-bottom: 2px solid #2a2a2a; box-shadow: 0 -2px #282828; color: #000; line-height: 52px; letter-spacing: -.650px; }
.head > div { display: flex; justify-content: center; padding-left: 5px; border-right: 2px solid #535353; box-shadow: inset 2px 0 #2c2c2c; }
.head .nh { border: 0; box-shadow: none; }
.head > div:nth-child(2) { box-shadow: none; }
.row { height: 60px; line-height: 58px; }
.row > div { padding-left: 10px; border-right: 2px solid #262626; border-bottom: 2px solid #2a2a2a; }
.alt { background: #2a2a2a; }
.row:not(.alt) { background: #1e1e1e; }
.row > .n { padding: 0 0 0 4px; color: #000; background: linear-gradient(#424242, #383838); border-right: 3px solid #2b2b2b; border-bottom: 3px solid #232323; border-top: 2px solid #4e4e4e; line-height: 60px; }
.row > .nm { padding-left: 7px; letter-spacing: -.750px; }
.row > .u { color: #828282; font-style: italic; letter-spacing: -1.200px; }
.row > .e, .row > .v { text-align: right; padding-right: 4px; }
.row > .ts { padding-left: 19px; letter-spacing: -.4px; }
.empty { flex: 1; background: linear-gradient(90deg, #323232 31px, #1e1e1e 31px); }
.scroll { flex: none; height: 29px; display: flex; background: #383838; border-bottom: 2px solid #272727; }
.scroll b { border: 2px solid #545454; }
.sl { width: 26px; display: flex; align-items: center; justify-content: center; background: #3c3c3c; }
.thumb { width: 2180px; margin-left: 2px; background: #404040; }
.scroll .track { flex: 1; border: 0; border-right: 2px solid #262626; }
.foot { flex: none; height: 68px; display: flex; align-items: flex-start; padding-top: 9px; padding-left: 6px; letter-spacing: -.9px; }
.show { width: 358px; height: 54px; padding-left: 4px; }
.show span { margin: 3px 0 0 7px; }
.show em { margin: 35px 0 0 auto; border-width: 6px 6px 0; border-top-color: #ccc; }
.form { margin: 12px 13px 0 auto; }
.tv { width: 44px; height: 44px; margin: 5px 6px 0 0; justify-content: center; background: #2d2d2d; }

/* annotations drawn over the screenshot */
.mark { position: absolute; border: 10px solid #d2341c; }
.m1 { left: 103px; top: 142px; width: 77px; height: 74px; }
.m2 { left: 985px; top: 137px; width: 146px; height: 83px; }
.m3 { left: 496px; top: 264px; width: 469px; height: 256px; }
.arrow { position: absolute; left: 758px; top: 541px; }
.note { position: absolute; margin: 0; font-family: Lato, sans-serif; font-weight: 900; font-size: 65px; line-height: 89px; color: #d2341c; -webkit-text-stroke: 1.500px #d2341c; font-variant-ligatures: none; }
.n6 { left: 98px; top: 536px; letter-spacing: 3.200px; }
.n7 { left: 723px; top: 1098px; letter-spacing: 2.600px; }
.n8 { left: 993px; top: 582px; letter-spacing: 2.900px; }
```
